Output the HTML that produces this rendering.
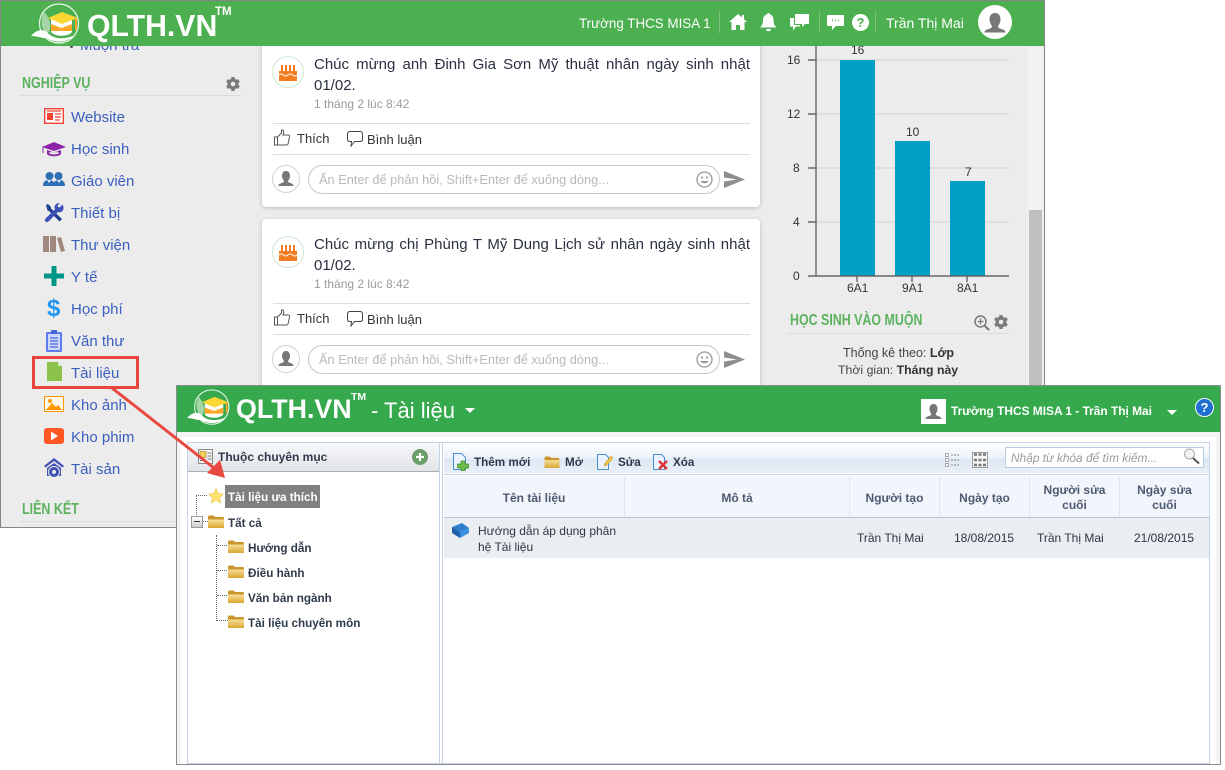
<!DOCTYPE html>
<html><head><meta charset="utf-8">
<style>
html,body{margin:0;padding:0;background:#fff;}
#p{position:relative;width:1225px;height:770px;overflow:hidden;background:#fff;font-family:"Liberation Sans",sans-serif;}
.a{position:absolute;}
.t{position:absolute;white-space:nowrap;}
.m{font-size:15px;color:#3b5fbf;left:71px;line-height:20px;}
.h{font-weight:bold;color:#5cb25f;font-size:16px;line-height:18px;transform-origin:left center;transform:scaleX(.78);}
.just{font-size:15px;color:#2b3040;line-height:21px;width:436px;text-align:justify;text-align-last:justify;}
.time{font-size:12px;color:#9a9a9a;line-height:14px;}
.act{font-size:13px;color:#333;line-height:16px;}
.inp{position:absolute;left:308px;width:410px;height:27px;border:1px solid #c8c8c8;border-radius:15px;background:#fff;}
.ph{font-size:12.8px;color:#b9b9b9;line-height:18px;}
.hr{position:absolute;left:273px;width:477px;height:1px;background:#dcdcdc;}
.card{position:absolute;left:262px;width:498px;background:#fff;border-radius:4px;box-shadow:0 1px 4px rgba(0,0,0,.2);}
.tick{font-size:12px;color:#333;line-height:14px;}
.b{font-weight:bold;color:#2f3a4a;font-size:11.7px;line-height:16px;}
.th{font-weight:bold;color:#4d5a70;font-size:12px;line-height:15px;text-align:center;position:absolute;}
.td{font-size:12px;color:#2f3440;line-height:16px;position:absolute;white-space:nowrap;}
.sep{position:absolute;top:476px;width:1px;height:41px;background:#dde6f2;}
.d{position:absolute;border-color:#666;border-style:dotted;border-width:0;}
</style></head><body><div id="p">

<svg class="a" style="left:0;top:0" width="0" height="0"><defs><linearGradient id="fg" x1="0" y1="0" x2="0" y2="1"><stop offset="0" stop-color="#f8e09a"/><stop offset="1" stop-color="#d9a52f"/></linearGradient></defs></svg>

<!-- BACK WINDOW -->
<div class="a" style="left:0;top:0;width:1043px;height:526px;background:#ececec;border:1px solid #868686"></div>
<div class="a" style="left:1028px;top:47px;width:15px;height:480px;background:#f2f2f2"></div>
<div class="a" style="left:1029px;top:210px;width:13px;height:175px;background:#bfbfbf"></div>

<!-- sidebar -->
<div class="t" style="left:80px;top:37px;font-size:15px;color:#3b5fbf;line-height:18px">Muộn trả</div>
<div class="a" style="left:70px;top:45px;width:3px;height:3px;border-radius:2px;background:#555"></div>
<div class="t h" style="left:22px;top:75px">NGHIỆP VỤ</div>
<div class="a" style="left:19px;top:95px;width:222px;height:1px;background:#dcdcdc"></div>
<svg class="a" style="left:225px;top:76px" width="16" height="16" viewBox="0 0 16 16"><g fill="#7a7a7a"><circle cx="8" cy="8" r="5.5"/><rect x="6.3" y="1" width="3.4" height="14" rx=".6"/><rect x="6.3" y="1" width="3.4" height="14" rx=".6" transform="rotate(60 8 8)"/><rect x="6.3" y="1" width="3.4" height="14" rx=".6" transform="rotate(120 8 8)"/></g><circle cx="8" cy="8" r="2.3" fill="#ececec"/></svg>

<div class="t m" style="top:108px">Website</div>
<div class="t m" style="top:140px">Học sinh</div>
<div class="t m" style="top:172px">Giáo viên</div>
<div class="t m" style="top:204px">Thiết bị</div>
<div class="t m" style="top:236px">Thư viện</div>
<div class="t m" style="top:268px">Y tế</div>
<div class="t m" style="top:300px">Học phí</div>
<div class="t m" style="top:332px">Văn thư</div>
<div class="t m" style="top:364px">Tài liệu</div>
<div class="t m" style="top:396px">Kho ảnh</div>
<div class="t m" style="top:428px">Kho phim</div>
<div class="t m" style="top:460px">Tài sản</div>
<div class="t h" style="left:22px;top:501px">LIÊN KẾT</div>
<div class="a" style="left:19px;top:521px;width:160px;height:1px;background:#dcdcdc"></div>

<!-- Sidebar icons -->
<svg class="a" style="left:44px;top:108px" width="20" height="16" viewBox="0 0 20 16"><rect x=".7" y=".7" width="18.6" height="14.6" fill="#fff" stroke="#f44336" stroke-width="1.4"/><rect x="3" y="5" width="6" height="7" fill="#f44336"/><path d="M3 3h14M11 6h6M11 9h6M11 12h5" stroke="#f44336" stroke-width="1.3"/></svg>
<svg class="a" style="left:41px;top:141px" width="26" height="17" viewBox="0 0 26 17"><path d="M13 1L25 6l-12 4L1 6z" fill="#8e24aa"/><path d="M6 9v4c2 3 12 3 14 0V9l-7 2.5z" fill="#8e24aa"/><ellipse cx="13" cy="12" rx="5" ry="1.5" fill="#ddd"/><path d="M2 6v6" stroke="#8e24aa"/></svg>
<svg class="a" style="left:43px;top:171px" width="22" height="16" viewBox="0 0 22 16"><g fill="#2f6fb5"><circle cx="6.5" cy="5" r="4"/><circle cx="15.5" cy="5" r="4"/><path d="M0 15c0-3 1-5 4-6l2 3 2-3 3 2 3-2 2 3 2-3c3 1 4 3 4 6z"/></g></svg>
<svg class="a" style="left:44px;top:203px" width="20" height="20" viewBox="0 0 20 20"><path d="M2 2l2-1 3 3 0 1.500 11 10.500-2.500 2.500L5 8 3.500 7.500z" fill="#1f3f8f"/><path d="M18.500 1.500l-3 3-1.500-.5-.5-1.500 2.500-2C13.500-.5 11 1 10.500 4c0 1 .2 1.500.5 2.200L1.500 15.500c-1 1-.5 2.500 0 3s2 1 3 0L14 9c3 1 5.500-1 5.500-4 0-1.500-.5-2.700-1-3.500z" fill="#3f51b5"/></svg>
<svg class="a" style="left:43px;top:236px" width="22" height="16" viewBox="0 0 22 16"><g fill="#a1887f"><rect x="0" y="0" width="6" height="16"/><rect x="7" y="0" width="6" height="16"/><path d="M14 2l4-1 4 14-4 1z"/></g></svg>
<svg class="a" style="left:44px;top:266px" width="20" height="20" viewBox="0 0 20 20"><path d="M7.5 0h5v7.500H20v5h-7.500V20h-5v-7.500H0v-5h7.500z" fill="#009688"/></svg>
<div class="t" style="left:47px;top:296px;font-size:24px;font-weight:bold;color:#2196f3;line-height:26px">$</div>
<svg class="a" style="left:46px;top:330px" width="16" height="22" viewBox="0 0 16 22"><rect x="0" y="2" width="16" height="20" rx="1.5" fill="#5c7cf0"/><rect x="2" y="4" width="12" height="16" fill="#cfd8fb"/><rect x="5" y="0" width="6" height="4" fill="#4a66d8"/><path d="M4 8h8M4 11h8M4 14h8M4 17h8" stroke="#4a66d8" stroke-width="1.3"/></svg>
<svg class="a" style="left:47px;top:362px" width="15" height="19" viewBox="0 0 15 19"><path d="M0 0h11l4 4v15H0z" fill="#8bc34a"/><path d="M11 0v4h4z" fill="#dcedc8"/></svg>
<svg class="a" style="left:44px;top:396px" width="20" height="16" viewBox="0 0 20 16"><rect x=".5" y=".5" width="19" height="15" fill="#fff8e8" stroke="#ff9800"/><path d="M2 14l6-7 4 4 2-2 4 5z" fill="#ff9800"/><circle cx="6" cy="5" r="2" fill="#ff9800"/></svg>
<svg class="a" style="left:44px;top:428px" width="20" height="16" viewBox="0 0 20 16"><rect width="20" height="16" rx="3" fill="#ff5722"/><path d="M7 3.500l7 4.500-7 4.500z" fill="#fff"/></svg>
<svg class="a" style="left:44px;top:458px" width="20" height="22" viewBox="0 0 20 22"><path d="M10 0L0 8l1.500 1.500L10 3l8.500 6.500L20 8z" fill="#3f51b5"/><path d="M3 10l7-5 7 5v8H3z" fill="#3f51b5"/><circle cx="10" cy="14" r="5.5" fill="#3f51b5" stroke="#ececec"/><circle cx="10" cy="14" r="2" fill="#ececec"/></svg>

<!-- cards -->
<div class="card" style="top:40px;height:167px"></div>
<div class="card" style="top:219px;height:175px"></div>

<!-- card 1 -->
<svg class="a" style="left:272px;top:56px" width="32" height="32" viewBox="0 0 32 32"><circle cx="16" cy="16" r="15.5" fill="#fff" stroke="#cfe6cf"/><path d="M7 15h18v10H7z" fill="#f57c20"/><path d="M7 19q2-2 4.500 0t4.500 0 4.500 0 4.500 0" stroke="#fff" fill="none"/><path d="M10 9v6M14 9v6M18 9v6M22 9v6" stroke="#f57c20" stroke-width="2"/></svg>
<div class="t just" style="left:314px;top:54px">Chúc mừng anh Đinh Gia Sơn Mỹ thuật nhân ngày sinh nhật</div>
<div class="t" style="left:314px;top:75px;font-size:15px;color:#2b3040;line-height:21px">01/02.</div>
<div class="t time" style="left:314px;top:97px">1 tháng 2 lúc 8:42</div>
<div class="hr" style="top:123px"></div>
<svg class="a" style="left:274px;top:129px" width="16" height="17" viewBox="0 0 16 17"><path d="M.5 8h3v8h-3zM3.500 8l4-4V1h1.500c1 1 1 3 0 5h5.500c1 0 1.500 1 1 2l-1.500 7c-.2.6-.6 1-1.200 1H3.500" fill="none" stroke="#555"/></svg>
<div class="t act" style="left:297px;top:131px">Thích</div>
<svg class="a" style="left:347px;top:131px" width="16" height="16" viewBox="0 0 16 16"><path d="M3 .5h10c1.500 0 2.500 1 2.500 2.500v5c0 1.500-1 2.500-2.500 2.500H7.500L4 15l.5-4.500H3C1.500 10.500.5 9.500.5 8V3C.5 1.500 1.500.5 3 .5z" fill="none" stroke="#444"/></svg>
<div class="t act" style="left:367px;top:132px">Bình luận</div>
<div class="hr" style="top:154px"></div>
<svg class="a" style="left:272px;top:165px" width="28" height="28" viewBox="0 0 28 28"><circle cx="14" cy="14" r="13.5" fill="#fff" stroke="#d0d0d0"/><path d="M14 6c3 0 4 2.500 4 5s-1.500 4-2 5c0 1 1 1.500 3 2.200 2 .7 2.500 1.500 2.500 2.800h-15c0-1.300.5-2.100 2.500-2.800 2-.7 3-1.200 3-2.200-.5-1-2-2.500-2-5s1-5 4-5z" fill="#777"/></svg>
<div class="inp" style="top:165px"></div>
<div class="t ph" style="left:319px;top:171px">Ấn Enter để phản hồi, Shift+Enter để xuống dòng...</div>
<svg class="a" style="left:696px;top:171px" width="17" height="17" viewBox="0 0 17 17"><circle cx="8.500" cy="8.500" r="7.500" fill="none" stroke="#999" stroke-width="1.3"/><circle cx="6" cy="6.500" r="1.100" fill="#999"/><circle cx="11" cy="6.500" r="1.100" fill="#999"/><path d="M4.500 10c1 3 7 3 8 0z" fill="#999"/></svg>
<svg class="a" style="left:724px;top:171px" width="22" height="17" viewBox="0 0 22 17"><path d="M0 0l21 8.500L0 17l0-6.500 13-2-13-2z" fill="#8e8e8e"/></svg>

<!-- card 2 -->
<svg class="a" style="left:272px;top:236px" width="32" height="32" viewBox="0 0 32 32"><circle cx="16" cy="16" r="15.5" fill="#fff" stroke="#cfe6cf"/><path d="M7 15h18v10H7z" fill="#f57c20"/><path d="M7 19q2-2 4.500 0t4.500 0 4.500 0 4.500 0" stroke="#fff" fill="none"/><path d="M10 9v6M14 9v6M18 9v6M22 9v6" stroke="#f57c20" stroke-width="2"/></svg>
<div class="t just" style="left:314px;top:234px">Chúc mừng chị Phùng T Mỹ Dung Lịch sử nhân ngày sinh nhật</div>
<div class="t" style="left:314px;top:255px;font-size:15px;color:#2b3040;line-height:21px">01/02.</div>
<div class="t time" style="left:314px;top:277px">1 tháng 2 lúc 8:42</div>
<div class="hr" style="top:303px"></div>
<svg class="a" style="left:274px;top:309px" width="16" height="17" viewBox="0 0 16 17"><path d="M.5 8h3v8h-3zM3.500 8l4-4V1h1.500c1 1 1 3 0 5h5.500c1 0 1.500 1 1 2l-1.500 7c-.2.6-.6 1-1.200 1H3.500" fill="none" stroke="#555"/></svg>
<div class="t act" style="left:297px;top:311px">Thích</div>
<svg class="a" style="left:347px;top:311px" width="16" height="16" viewBox="0 0 16 16"><path d="M3 .5h10c1.500 0 2.500 1 2.500 2.500v5c0 1.500-1 2.500-2.500 2.500H7.500L4 15l.5-4.500H3C1.500 10.500.5 9.500.5 8V3C.5 1.500 1.500.5 3 .5z" fill="none" stroke="#444"/></svg>
<div class="t act" style="left:367px;top:312px">Bình luận</div>
<div class="hr" style="top:334px"></div>
<svg class="a" style="left:272px;top:345px" width="28" height="28" viewBox="0 0 28 28"><circle cx="14" cy="14" r="13.5" fill="#fff" stroke="#d0d0d0"/><path d="M14 6c3 0 4 2.500 4 5s-1.500 4-2 5c0 1 1 1.500 3 2.200 2 .7 2.500 1.500 2.500 2.800h-15c0-1.300.5-2.100 2.500-2.800 2-.7 3-1.200 3-2.200-.5-1-2-2.500-2-5s1-5 4-5z" fill="#777"/></svg>
<div class="inp" style="top:345px"></div>
<div class="t ph" style="left:319px;top:351px">Ấn Enter để phản hồi, Shift+Enter để xuống dòng...</div>
<svg class="a" style="left:696px;top:351px" width="17" height="17" viewBox="0 0 17 17"><circle cx="8.500" cy="8.500" r="7.500" fill="none" stroke="#999" stroke-width="1.3"/><circle cx="6" cy="6.500" r="1.100" fill="#999"/><circle cx="11" cy="6.500" r="1.100" fill="#999"/><path d="M4.500 10c1 3 7 3 8 0z" fill="#999"/></svg>
<svg class="a" style="left:724px;top:351px" width="22" height="17" viewBox="0 0 22 17"><path d="M0 0l21 8.500L0 17l0-6.500 13-2-13-2z" fill="#8e8e8e"/></svg>

<!-- chart -->
<svg class="a" style="left:780px;top:40px" width="240" height="250" viewBox="780 40 240 250">
<path d="M816 60H1009M816 114H1009M816 168H1009M816 222H1009" stroke="#dedede" stroke-width="2"/>
<rect x="840" y="60" width="35" height="216" fill="#00a0c6"/>
<rect x="895" y="141" width="35" height="135" fill="#00a0c6"/>
<rect x="950" y="181" width="35" height="95" fill="#00a0c6"/>
<path d="M816 40V276M808 276H1009M808 60h8M808 114h8M808 168h8M808 222h8M857 276v6M912 276v6M967 276v6" stroke="#666" stroke-width="1.4" fill="none"/>
</svg>
<div class="t tick" style="left:787px;top:53px">16</div>
<div class="t tick" style="left:787px;top:107px">12</div>
<div class="t tick" style="left:793px;top:161px">8</div>
<div class="t tick" style="left:793px;top:215px">4</div>
<div class="t tick" style="left:793px;top:269px">0</div>
<div class="t tick" style="left:851px;top:43px">16</div>
<div class="t tick" style="left:906px;top:125px">10</div>
<div class="t tick" style="left:965px;top:165px">7</div>
<div class="t tick" style="left:847px;top:281px">6A1</div>
<div class="t tick" style="left:902px;top:281px">9A1</div>
<div class="t tick" style="left:957px;top:281px">8A1</div>
<div class="t h" style="left:790px;top:312px;transform:scaleX(.776)">HỌC SINH VÀO MUỘN</div>
<div class="a" style="left:787px;top:333px;width:222px;height:1px;background:#dcdcdc"></div>
<svg class="a" style="left:974px;top:315px" width="16" height="16" viewBox="0 0 16 16"><circle cx="6.500" cy="6.500" r="5.500" fill="none" stroke="#7a7a7a" stroke-width="1.5"/><path d="M6.500 3.500v6M3.500 6.500h6" stroke="#7a7a7a" stroke-width="1.3"/><path d="M10.500 10.500L15 15" stroke="#7a7a7a" stroke-width="2"/></svg>
<svg class="a" style="left:993px;top:314px" width="16" height="16" viewBox="0 0 16 16"><g fill="#7a7a7a"><circle cx="8" cy="8" r="5.500"/><rect x="6.300" y="1" width="3.400" height="14" rx=".6"/><rect x="6.300" y="1" width="3.400" height="14" rx=".6" transform="rotate(60 8 8)"/><rect x="6.300" y="1" width="3.400" height="14" rx=".6" transform="rotate(120 8 8)"/></g><circle cx="8" cy="8" r="2.300" fill="#ececec"/></svg>
<div class="t" style="left:843px;top:345px;font-size:12.5px;color:#444;line-height:16px">Thống kê theo: <b style="color:#333">Lớp</b></div>
<div class="t" style="left:838px;top:362px;font-size:12.3px;color:#444;line-height:16px">Thời gian: <b style="color:#333">Tháng này</b></div>

<!-- back header -->
<div class="a" style="left:1px;top:1px;width:1043px;height:45px;background:#4caf50"></div>
<svg class="a" style="left:30px;top:3px" width="54" height="42" viewBox="0 0 54 42">
<circle cx="29" cy="20.500" r="19.500" fill="none" stroke="#fff" stroke-width="1.200" stroke-opacity=".9"/>
<path d="M16 30c-5-5-6-13-2-21 5 5 8 13 5 20z" fill="#a5d6a7"/>
<path d="M21 16h21v13c-4 5-17 5-21 0z" fill="#fff"/>
<path d="M21 21l10.500 4 10.500-4v7l-21 0z" fill="#ffa726"/>
<path d="M32 9l16 6-16 6-14-6z" fill="#fdd835"/>
<path d="M46 15v12" stroke="#f9a825" stroke-width="2"/>
<path d="M1 33c6-7 12-7 16-4 4 3 1 7-4 6-4-1-8-2-12-2z" fill="#fff"/>
<path d="M15 34c10 7 22 6 30-2-8 4-20 5-26-1z" fill="#fff"/>
</svg>
<div class="t" style="left:87px;top:9px;font-size:30.200px;font-weight:bold;color:#fff;line-height:36px">QLTH.VN</div>
<div class="t" style="left:215px;top:6px;font-size:11.500px;font-weight:bold;color:#fff;line-height:13px">TM</div>
<div class="t" style="left:579px;top:15px;font-size:13.400px;color:#fff;line-height:17px">Trường THCS MISA 1</div>
<div class="a" style="left:719px;top:11px;width:1px;height:22px;background:#7cc47f"></div>
<div class="a" style="left:819px;top:11px;width:1px;height:22px;background:#7cc47f"></div>
<div class="a" style="left:875px;top:11px;width:1px;height:22px;background:#7cc47f"></div>
<svg class="a" style="left:729px;top:14px" width="18" height="16" viewBox="0 0 18 16"><path d="M9 0L0 8h2.500v8H7v-5h4v5h4.500V8H18l-3-2.700V1h-2v2.500z" fill="#fff"/></svg>
<svg class="a" style="left:760px;top:13px" width="17" height="19" viewBox="0 0 17 19"><path d="M8.500 0c1 0 1.500.7 1.500 1.500 2.500.7 3.500 3 3.500 5.500 0 4 1 5.500 3 7.500H0c2-2 3-3.500 3-7.500C3 4.500 4 2.200 7 1.500 7 .7 7.500 0 8.500 0z" fill="#fff"/><path d="M6 16h5c0 3-5 3-5 0z" fill="#fff"/></svg>
<svg class="a" style="left:790px;top:14px" width="19" height="17" viewBox="0 0 19 17"><path d="M5 0h14v10h-4l-3 3v-3H5z" fill="#fff"/><path d="M0 4h4v7h6v1.500H6l-3 4v-4H0z" fill="#fff"/></svg>
<svg class="a" style="left:827px;top:15px" width="17" height="15" viewBox="0 0 17 15"><path d="M1 0h15a1 1 0 011 1v9a1 1 0 01-1 1H9l-4 4v-4H1a1 1 0 01-1-1V1a1 1 0 011-1z" fill="#fff"/><path d="M5 5.500h1M8 5.500h1M11 5.500h1" stroke="#4caf50" stroke-width="1.4"/></svg>
<svg class="a" style="left:852px;top:14px" width="17" height="17" viewBox="0 0 17 17"><circle cx="8.500" cy="8.500" r="8.500" fill="#fff"/><text x="8.500" y="13" text-anchor="middle" font-size="13" font-weight="bold" font-family="Liberation Sans" fill="#4caf50">?</text></svg>
<div class="t" style="left:886px;top:15px;font-size:14px;color:#fff;line-height:17px">Trần Thị Mai</div>
<svg class="a" style="left:978px;top:5px" width="34" height="34" viewBox="0 0 34 34"><circle cx="17" cy="17" r="17" fill="#fff"/><path d="M17 8c4 0 5.500 3 5.500 6.500S20.500 20 20 21.500c0 1.200 1.500 2 4 2.700 2.500.8 3.500 1.800 3.500 3.300h-21c0-1.500 1-2.500 3.500-3.300 2.500-.7 4-1.500 4-2.700-.5-1.500-2.500-3.500-2.500-7S13 8 17 8z" fill="#777"/></svg>

<!-- FRONT WINDOW -->
<div class="a" style="left:176px;top:385px;width:1045px;height:380px;background:#fff;border:1px solid #8c8c8c;box-sizing:border-box"></div>
<div class="a" style="left:177px;top:386px;width:1043px;height:46px;background:#36a94c"></div>
<div class="a" style="left:177px;top:432px;width:1043px;height:332px;background:#f4f4f4"></div>
<div class="a" style="left:181px;top:437px;width:1035px;height:327px;background:#fff"></div>
<div class="a" style="left:187px;top:442px;width:1023px;height:322px;background:#fff;border:1px solid #c4d3e6;box-sizing:border-box"></div>

<svg class="a" style="left:186px;top:389px" width="48" height="37" viewBox="0 0 54 42">
<circle cx="29" cy="20.500" r="19.500" fill="none" stroke="#fff" stroke-width="1.200" stroke-opacity=".9"/>
<path d="M16 30c-5-5-6-13-2-21 5 5 8 13 5 20z" fill="#a5d6a7"/>
<path d="M21 16h21v13c-4 5-17 5-21 0z" fill="#fff"/>
<path d="M21 21l10.500 4 10.500-4v7l-21 0z" fill="#ffa726"/>
<path d="M32 9l16 6-16 6-14-6z" fill="#fdd835"/>
<path d="M46 15v12" stroke="#f9a825" stroke-width="2"/>
<path d="M1 33c6-7 12-7 16-4 4 3 1 7-4 6-4-1-8-2-12-2z" fill="#fff"/>
<path d="M15 34c10 7 22 6 30-2-8 4-20 5-26-1z" fill="#fff"/>
</svg>
<div class="t" style="left:236px;top:393px;font-size:26.800px;font-weight:bold;color:#fff;line-height:32px">QLTH.VN</div>
<div class="t" style="left:351px;top:391px;font-size:10.500px;font-weight:bold;color:#fff;line-height:12px">TM</div>
<div class="t" style="left:371px;top:398px;font-size:22px;color:#fff;line-height:25px">- Tài liệu</div>
<div class="a" style="left:465px;top:408px;width:0;height:0;border-left:5.500px solid transparent;border-right:5.500px solid transparent;border-top:5.500px solid #fff"></div>
<svg class="a" style="left:921px;top:399px" width="25" height="25" viewBox="0 0 25 25"><rect width="25" height="25" fill="#fff"/><path d="M12.500 5c3 0 4 2.500 4 5s-1.500 4-1.800 5c0 1 1 1.500 3 2.200 1.800.6 2.800 1.300 2.800 2.800h-16c0-1.500 1-2.200 2.800-2.800 2-.7 3-1.200 3-2.200-.3-1-1.800-2.500-1.800-5s1-5 4-5z" fill="#777"/></svg>
<div class="t" style="left:951px;top:404px;font-size:11.900px;font-weight:bold;color:#fff;line-height:15px">Trường THCS MISA 1 - Trần Thị Mai</div>
<div class="a" style="left:1167px;top:410px;width:0;height:0;border-left:5.500px solid transparent;border-right:5.500px solid transparent;border-top:5.500px solid #fff"></div>
<svg class="a" style="left:1195px;top:398px" width="19" height="19" viewBox="0 0 19 19"><circle cx="9.500" cy="9.500" r="9" fill="#1f6fd0" stroke="#fff"/><text x="9.500" y="14" text-anchor="middle" font-size="13" font-weight="bold" font-family="Liberation Sans" fill="#fff">?</text></svg>

<!-- left panel -->
<div class="a" style="left:188px;top:443px;width:251px;height:28px;background:linear-gradient(#f7f8fa,#e2e4e8);border-bottom:1px solid #a9aeb6"></div>
<div class="a" style="left:439px;top:443px;width:1px;height:321px;background:#c4d3e6"></div>
<div class="a" style="left:442px;top:443px;width:1px;height:321px;background:#c4d3e6"></div>
<svg class="a" style="left:198px;top:449px" width="15" height="15" viewBox="0 0 15 15"><rect x=".5" y=".5" width="14" height="14" fill="#f4f4f4" stroke="#8a8a8a"/><rect x="2" y="2.500" width="6" height="6" fill="#f5cf5c" stroke="#a88a2a" stroke-width=".7"/><path d="M9.500 4h4M9.500 7h4M9.500 10h4M2 11.500h6" stroke="#777"/></svg>
<div class="t b" style="left:218px;top:449px;font-size:12px">Thuộc chuyên mục</div>
<svg class="a" style="left:412px;top:449px" width="16" height="16" viewBox="0 0 16 16"><circle cx="8" cy="8" r="8" fill="#6a9f6a"/><path d="M8 4v8M4 8h8" stroke="#fff" stroke-width="2.200"/></svg>

<!-- tree -->
<div class="d" style="left:196px;top:495px;width:10px;height:21px;border-top-width:1px;border-left-width:1px"></div>
<div class="d" style="left:203px;top:521px;width:5px;height:0;border-top-width:1px"></div>
<div class="d" style="left:216px;top:535px;width:11px;height:85px;border-left-width:1px;border-bottom-width:1px"></div>
<div class="d" style="left:217px;top:545px;width:10px;border-top-width:1px"></div>
<div class="d" style="left:217px;top:570px;width:10px;border-top-width:1px"></div>
<div class="d" style="left:217px;top:595px;width:10px;border-top-width:1px"></div>
<svg class="a" style="left:208px;top:488px" width="16" height="16" viewBox="0 0 16 16"><path d="M8 .5l2.300 5 5.200.6-3.900 3.500 1.100 5.400L8 12.300 3.300 15l1.100-5.400L.5 6.100l5.200-.6z" fill="#ffe270" stroke="#e6c04a" stroke-width=".6"/></svg>
<div class="a" style="left:225px;top:485px;width:95px;height:23px;background:#808080"></div>
<div class="t b" style="left:228px;top:490px;color:#fff">Tài liệu ưa thích</div>
<div class="a" style="left:191px;top:516px;width:12px;height:12px;box-sizing:border-box;border:1px solid #999;background:linear-gradient(#fff,#ccc)"></div>
<div class="a" style="left:194px;top:521px;width:6px;height:1px;background:#333"></div>
<svg class="a" style="left:208px;top:515px" width="16" height="13" viewBox="0 0 16 13"><path d="M0 2q0-1.500 1.500-1.500h4L7 2h7.500q1.500 0 1.500 1.500V13H0z" fill="#c9962c"/><path d="M0 4.500h16v7q0 1.500-1.500 1.500h-13Q0 13 0 11.500z" fill="url(#fg)"/></svg>
<div class="t b" style="left:228px;top:516px">Tất cả</div>
<svg class="a" style="left:228px;top:540px" width="16" height="13" viewBox="0 0 16 13"><path d="M0 2q0-1.500 1.500-1.500h4L7 2h7.500q1.500 0 1.500 1.500V13H0z" fill="#c9962c"/><path d="M0 4.500h16v7q0 1.500-1.500 1.500h-13Q0 13 0 11.500z" fill="url(#fg)"/></svg>
<div class="t b" style="left:248px;top:541px">Hướng dẫn</div>
<svg class="a" style="left:228px;top:565px" width="16" height="13" viewBox="0 0 16 13"><path d="M0 2q0-1.500 1.500-1.500h4L7 2h7.500q1.500 0 1.500 1.500V13H0z" fill="#c9962c"/><path d="M0 4.500h16v7q0 1.500-1.500 1.500h-13Q0 13 0 11.500z" fill="url(#fg)"/></svg>
<div class="t b" style="left:248px;top:566px">Điều hành</div>
<svg class="a" style="left:228px;top:590px" width="16" height="13" viewBox="0 0 16 13"><path d="M0 2q0-1.500 1.500-1.500h4L7 2h7.500q1.500 0 1.500 1.500V13H0z" fill="#c9962c"/><path d="M0 4.500h16v7q0 1.500-1.500 1.500h-13Q0 13 0 11.500z" fill="url(#fg)"/></svg>
<div class="t b" style="left:248px;top:591px">Văn bản ngành</div>
<svg class="a" style="left:228px;top:615px" width="16" height="13" viewBox="0 0 16 13"><path d="M0 2q0-1.500 1.500-1.500h4L7 2h7.500q1.500 0 1.500 1.500V13H0z" fill="#c9962c"/><path d="M0 4.500h16v7q0 1.500-1.500 1.500h-13Q0 13 0 11.500z" fill="url(#fg)"/></svg>
<div class="t b" style="left:248px;top:616px">Tài liệu chuyên môn</div>

<!-- toolbar -->
<div class="a" style="left:444px;top:444px;width:765px;height:29px;background:linear-gradient(#fdfeff 0%,#eef3f9 45%,#dde7f3 55%,#eaf0f8 100%)"></div>
<div class="a" style="left:444px;top:474px;width:765px;height:1px;background:#c4d3e6"></div>
<svg class="a" style="left:453px;top:453px" width="17" height="18" viewBox="0 0 17 18"><path d="M.5.500h8l4 4v12H.5z" fill="#eaf3ff" stroke="#4a90d0"/><path d="M8 8h4v3h3.500v4H12v3H8v-3H4.500v-4H8z" fill="#6cc04a" stroke="#3d8a2a" stroke-width=".7"/></svg>
<div class="t b" style="left:474px;top:455px">Thêm mới</div>
<svg class="a" style="left:544px;top:456px" width="16" height="12" viewBox="0 0 16 13"><path d="M0 2q0-1.500 1.500-1.500h4L7 2h7.500q1.500 0 1.500 1.500V13H0z" fill="#c9962c"/><path d="M0 4.500h16v7q0 1.500-1.500 1.500h-13Q0 13 0 11.500z" fill="url(#fg)"/></svg>
<div class="t b" style="left:565px;top:455px">Mở</div>
<svg class="a" style="left:597px;top:454px" width="16" height="16" viewBox="0 0 16 16"><path d="M.5.500h8l3 3v12H.5z" fill="#eaf3ff" stroke="#4a90d0"/><path d="M7 12l1-3 6-7 2 2-6 7z" fill="#f2c54a" stroke="#b08a20" stroke-width=".5"/></svg>
<div class="t b" style="left:618px;top:455px">Sửa</div>
<svg class="a" style="left:653px;top:454px" width="16" height="16" viewBox="0 0 16 16"><path d="M.5.500h8l3 3v12H.5z" fill="#eaf3ff" stroke="#4a90d0"/><path d="M6 7l8 8M14 7l-8 8" stroke="#d33" stroke-width="2.500"/></svg>
<div class="t b" style="left:673px;top:455px">Xóa</div>
<svg class="a" style="left:945px;top:453px" width="15" height="14" viewBox="0 0 15 14"><g fill="#fff" stroke="#888" stroke-width=".7"><rect x=".5" y=".5" width="3" height="3"/><rect x=".5" y="5.500" width="3" height="3"/><rect x=".5" y="10.500" width="3" height="3"/></g><path d="M6 2h9M6 7h9M6 12h9" stroke="#888" stroke-dasharray="2 1"/></svg>
<svg class="a" style="left:972px;top:452px" width="16" height="16" viewBox="0 0 16 16"><rect x=".5" y=".5" width="15" height="15" fill="#f4f4f4" stroke="#999"/><path d="M2 2.500h3M6.500 2.500h3M11 2.500h3M2 8h3M6.500 8h3M11 8h3M2 13h3M6.500 13h3M11 13h3" stroke="#777" stroke-width="2.500"/></svg>
<div class="a" style="left:1005px;top:447px;width:199px;height:21px;box-sizing:border-box;background:#fff;border:1px solid #b8cce0"></div>
<div class="t" style="left:1011px;top:451px;font-size:11.900px;font-style:italic;color:#9a9a9a;line-height:15px">Nhập từ khóa để tìm kiếm...</div>
<svg class="a" style="left:1183px;top:448px" width="17" height="17" viewBox="0 0 17 17"><circle cx="6.500" cy="6" r="5" fill="#f2f2f2" stroke="#aaa"/><path d="M10 10l6 5.500" stroke="#555" stroke-width="2"/></svg>

<!-- table -->
<div class="a" style="left:444px;top:476px;width:765px;height:41px;background:#f2f5fc;border-bottom:1px solid #b8c6d8"></div>
<div class="sep" style="left:624px"></div>
<div class="sep" style="left:849px"></div>
<div class="sep" style="left:939px"></div>
<div class="sep" style="left:1029px"></div>
<div class="sep" style="left:1119px"></div>
<div class="th" style="left:444px;width:180px;top:491px">Tên tài liệu</div>
<div class="th" style="left:625px;width:224px;top:491px">Mô tả</div>
<div class="th" style="left:850px;width:89px;top:491px">Người tạo</div>
<div class="th" style="left:940px;width:89px;top:491px">Ngày tạo</div>
<div class="th" style="left:1030px;width:89px;top:483px">Người sửa<br>cuối</div>
<div class="th" style="left:1120px;width:89px;top:483px">Ngày sửa<br>cuối</div>
<div class="a" style="left:444px;top:518px;width:765px;height:40px;background:#eaedf2"></div>
<svg class="a" style="left:452px;top:523px" width="17" height="15" viewBox="0 0 17 15"><path d="M0 4L10 0l7 5-9 4z" fill="#2f7fd0"/><path d="M0 4l8 5v6L0 10z" fill="#1f5ea8"/><path d="M8 9l9-4v5l-9 5z" fill="#3a8fe0"/></svg>
<div class="td" style="left:478px;top:523px">Hướng dẫn áp dụng phân<br>hệ Tài liệu</div>
<div class="td" style="left:857px;top:530px">Trần Thị Mai</div>
<div class="td" style="left:954px;top:530px">18/08/2015</div>
<div class="td" style="left:1037px;top:530px">Trần Thị Mai</div>
<div class="td" style="left:1134px;top:530px">21/08/2015</div>

<!-- red highlight + arrow -->
<div class="a" style="left:32px;top:356px;width:107px;height:33px;box-sizing:border-box;border:3px solid #e8433c"></div>
<svg class="a" style="left:100px;top:380px" width="140" height="110" viewBox="100 380 140 110"><path d="M112 388L214 468" stroke="#e8483f" stroke-width="3"/><path d="M225 478L207 473 220 460z" fill="#e8483f"/></svg>

</div></body></html>
